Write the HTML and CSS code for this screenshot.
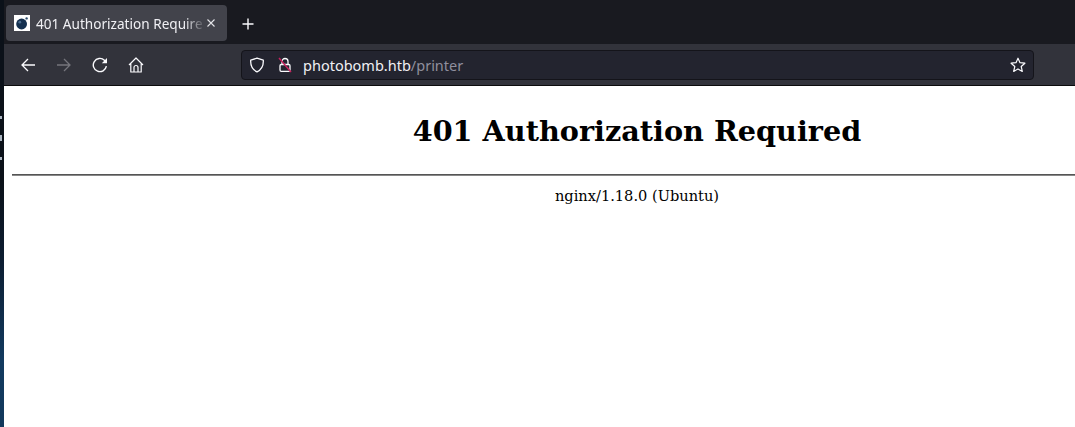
FILE: index.html
```html
<!DOCTYPE html>
<html>
<head>
    <meta charset="UTF-8">
    <title>401 Authorization Required</title>
    <link rel="stylesheet" href="styles.css">
</head>
<body>
    <div class="desktop">
        <span class="speck speck1"></span>
        <span class="speck speck2"></span>
        <span class="speck speck3"></span>
    </div>
    <div class="browser">
        <div class="tabbar">
            <div class="tab">
                <svg class="favicon" width="16" height="16" viewBox="0 0 16 16">
                    <rect width="16" height="16" fill="#fff"/>
                    <circle cx="7.6" cy="9" r="5.4" fill="#14304f"/>
                    <circle cx="5.8" cy="7.2" r="1.4" fill="#4a6a8c"/>
                    <circle cx="12.6" cy="3.4" r="1.2" fill="#2a4a6c"/>
                </svg>
                <span class="tab_title">401 Authorization Require</span>
                <svg class="tab_close" width="10" height="10" viewBox="0 0 10 10">
                    <path d="M1.5 1.5L8.5 8.5M8.5 1.5L1.5 8.5" stroke="#e4e4e8" stroke-width="1.1" fill="none"/>
                </svg>
            </div>
            <svg class="newtab" width="14" height="14" viewBox="0 0 14 14">
                <path d="M7 1.5V12.5M1.5 7H12.5" stroke="#fbfbfe" stroke-width="1.4" fill="none"/>
            </svg>
        </div>
        <div class="toolbar">
            <div class="nav_btns">
                <svg width="16" height="16" viewBox="0 0 16 16">
                    <path d="M15 8H2M8 2L2 8L8 14" stroke="#fbfbfe" stroke-width="1.3" fill="none"/>
                </svg>
                <svg width="16" height="16" viewBox="0 0 16 16">
                    <path d="M1 8H14M8 2L14 8L8 14" stroke="#75757c" stroke-width="1.3" fill="none"/>
                </svg>
                <svg width="16" height="16" viewBox="0 0 16 16">
                    <path d="M14.4 9.2A6.6 6.6 0 1 1 12.4 3.2L14 4.8" stroke="#fbfbfe" stroke-width="1.4" fill="none"/>
                    <path d="M15 1V6.2H9.8Z" fill="#fbfbfe"/>
                </svg>
                <svg width="16" height="16" viewBox="0 0 16 16">
                    <path d="M1 8L8 1L15 8M2.8 6.5V15H13.2V6.5M6 15V10.5A2 2 0 0 1 10 10.5V15" stroke="#fbfbfe" stroke-width="1.2" fill="none" stroke-linejoin="round"/>
                </svg>
            </div>
            <div class="urlbar">
                <svg class="shield" width="16" height="16" viewBox="0 0 16 16">
                    <path d="M8 1.2L14.3 3.2C14.6 8.5 12.6 12.6 8 14.9C3.4 12.6 1.4 8.5 1.7 3.2Z" stroke="#fbfbfe" stroke-width="1.3" fill="none" stroke-linejoin="round"/>
                </svg>
                <svg class="lock" width="16" height="16" viewBox="0 0 16 16">
                    <path d="M5 7V4.5A3 3 0 0 1 11 4.5V7" stroke="#fbfbfe" stroke-width="1.3" fill="none"/>
                    <rect x="3" y="7.5" width="10" height="6.8" rx="1.2" stroke="#fbfbfe" stroke-width="1.3" fill="none"/>
                    <path d="M2 1L14 15" stroke="#c5225d" stroke-width="1.5" fill="none"/>
                </svg>
                <span class="url"><span class="url_host">photobomb.htb</span>/printer</span>
                <svg class="star" width="16" height="16" viewBox="0 0 16 16">
                    <path d="M8 1.2L10 5.7L14.9 6.2L11.2 9.5L12.3 14.4L8 11.9L3.7 14.4L4.8 9.5L1.1 6.2L6 5.7Z" stroke="#fbfbfe" stroke-width="1.2" fill="none" stroke-linejoin="round"/>
                </svg>
            </div>
        </div>
        <div class="viewport">
            <div class="page">
                <h1>401 Authorization Required</h1>
                <hr>
                <div class="server">nginx/1.18.0 (Ubuntu)</div>
            </div>
        </div>
    </div>
</body>
</html>
```

FILE: styles.css
```css
html,body{
    margin:0;
    height:100%;
    overflow:hidden;
}
body{
    display:flex;
    background:#0a1018;
}
.desktop{
    position:relative;
    flex:0 0 4px;
    background:linear-gradient(#0b1119 0,#0b1119 180px,#0c1d31 260px,#123a5f 360px,#12395c 427px);
}
.speck{
    position:absolute;
    left:0;
    width:2px;
    height:3px;
    background:#aab4c0;
}
.speck1{top:116px;}
.speck2{top:135px;height:6px;}
.speck3{top:157px;}
.browser{
    flex:1;
    min-width:0;
    display:flex;
    flex-direction:column;
}
.tabbar{
    height:44px;
    margin-left:-4px;
    padding:5px 0 0 6px;
    box-sizing:border-box;
    display:flex;
    align-items:flex-start;
    background:#191a20;
}
.tab{
    width:221px;
    height:36px;
    box-sizing:border-box;
    padding:0 11px 0 8px;
    display:flex;
    align-items:center;
    background:#42434b;
    border-radius:4px;
}
.favicon{
    flex:none;
    margin-right:6px;
}
.tab_title{
    flex:1;
    overflow:hidden;
    white-space:nowrap;
    color:#f0f0f4;
    font:13.6px "Noto Sans",sans-serif;
    -webkit-mask-image:linear-gradient(to left,transparent 0,#000 22px);
    mask-image:linear-gradient(to left,transparent 0,#000 22px);
}
.tab_close{
    flex:none;
}
.newtab{
    margin:12px 0 0 14px;
}
.toolbar{
    height:42px;
    box-sizing:border-box;
    padding:6px 41px 5px 0;
    display:flex;
    align-items:stretch;
    background:#32333b;
    border-bottom:1px solid #0c0c0d;
}
.nav_btns{
    width:237px;
    box-sizing:border-box;
    padding:0 0 0 16px;
    display:flex;
    align-items:center;
    gap:20px;
}
.urlbar{
    flex:1;
    display:flex;
    align-items:center;
    padding:0 7px 0 7px;
    background:#23242f;
    border:1px solid #14141a;
    border-radius:4px;
}
.lock{
    margin-left:12px;
}
.url{
    flex:1;
    margin-left:10px;
    color:#8f8f9d;
    font:14.5px "Noto Sans",sans-serif;
}
.url_host{
    color:#f0f0f4;
}
.viewport{
    flex:1;
    overflow:hidden;
    background:#fff;
}
.page{
    width:1250px;
    padding:0 8px;
    color:#000;
    font:16px "DejaVu Serif",serif;
    text-align:center;
}
h1{
    margin:28px 0 26px;
    font-size:28.7px;
    font-weight:bold;
}
hr{
    margin:8px 0 11px;
    border:0;
    border-top:1px solid #555;
    border-bottom:1px solid #888;
}
.server{
    font-size:14.6px;
}
```
